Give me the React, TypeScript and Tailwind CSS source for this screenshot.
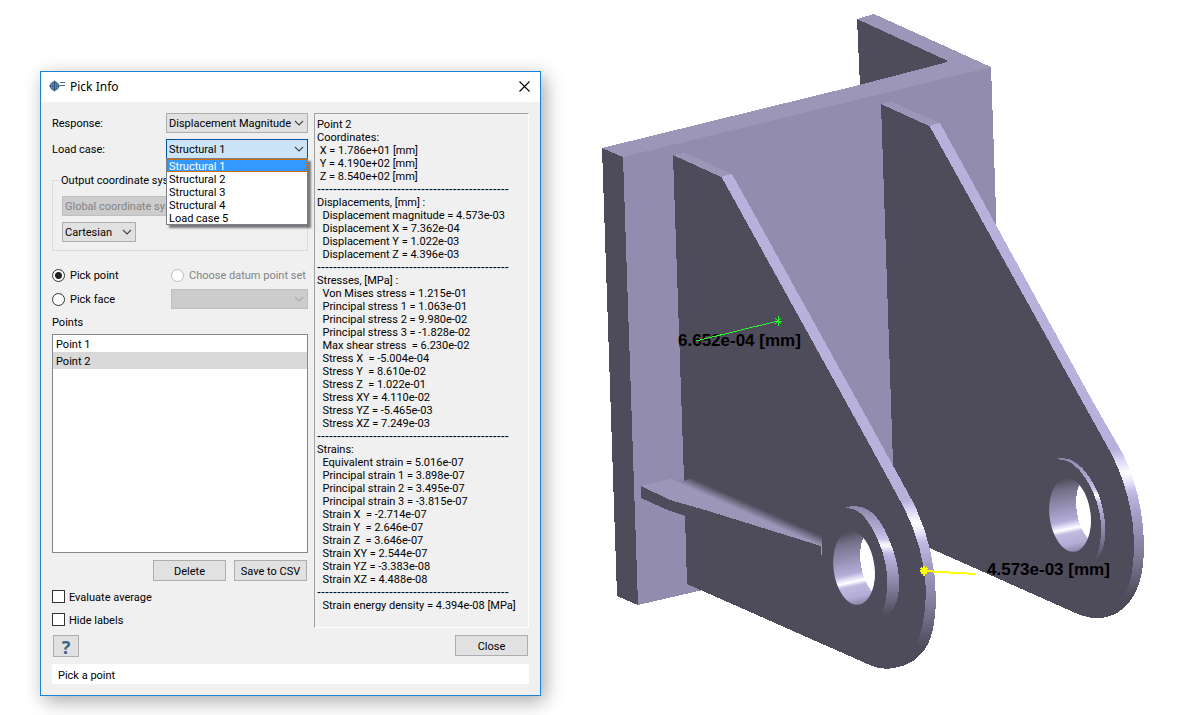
import { useState, type ReactNode, type SelectHTMLAttributes } from "react";

const RULE = "-".repeat(48);

const REPORT = `Point 2
Coordinates:
 X = 1.786e+01 [mm]
 Y = 4.190e+02 [mm]
 Z = 8.540e+02 [mm]
---
Displacements, [mm] :
  Displacement magnitude = 4.573e-03
  Displacement X = 7.362e-04
  Displacement Y = 1.022e-03
  Displacement Z = 4.396e-03
---
Stresses, [MPa] :
  Von Mises stress = 1.215e-01
  Principal stress 1 = 1.063e-01
  Principal stress 2 = 9.980e-02
  Principal stress 3 = -1.828e-02
  Max shear stress  = 6.230e-02
  Stress X  = -5.004e-04
  Stress Y  = 8.610e-02
  Stress Z  = 1.022e-01
  Stress XY = 4.110e-02
  Stress YZ = -5.465e-03
  Stress XZ = 7.249e-03
---
Strains:
  Equivalent strain = 5.016e-07
  Principal strain 1 = 3.898e-07
  Principal strain 2 = 3.495e-07
  Principal strain 3 = -3.815e-07
  Strain X  = -2.714e-07
  Strain Y  = 2.646e-07
  Strain Z  = 3.646e-07
  Strain XY = 2.544e-07
  Strain YZ = -3.383e-08
  Strain XZ = 4.488e-08
---
  Strain energy density = 4.394e-08 [MPa]`.split("\n");

const LOAD_CASES = ["Structural 1", "Structural 2", "Structural 3", "Structural 4", "Load case 5"];

function Select({ tone, className, children, ...rest }: SelectHTMLAttributes<HTMLSelectElement> & { tone: "normal" | "open" | "disabled"; className: string; children?: ReactNode }) {
  const tones = {
    normal: "border-[#adadad] bg-[#e1e1e1] text-black",
    open: "border-[#005499] bg-[#cce4f7] text-black",
    disabled: "border-[#bfbfbf] bg-[#cccccc] text-[#838383]",
  };
  return (
    <div className={`relative ${className}`}>
      <select {...rest} className={`block h-5 w-full appearance-none rounded-none border pt-0.5 pl-0.5 text-[11px] leading-4 opacity-100 outline-none ${tones[tone]}`}>
        {children}
      </select>
      <svg className="pointer-events-none absolute top-1.5 right-1 h-2 w-2.5" viewBox="0 0 10 8" fill="none" stroke={tone === "disabled" ? "#a8a8a8" : "#444"} strokeWidth="1.1">
        <path d="M1 2l4 4 4-4" />
      </svg>
    </div>
  );
}

function Radio({ label, ...rest }: { label: string; disabled?: boolean; defaultChecked?: boolean }) {
  return (
    <label className={`flex items-center gap-[5px] whitespace-nowrap ${rest.disabled ? "text-[#838383]" : ""}`}>
      <input
        type="radio"
        name="pick"
        {...rest}
        className="size-[13px] shrink-0 appearance-none rounded-full border border-[#333] bg-white checked:bg-[radial-gradient(circle,#222_3px,#fff_4px)] disabled:border-[#bcbcbc]"
      />
      <span className="pt-0.5">{label}</span>
    </label>
  );
}

function Check({ label }: { label: string }) {
  return (
    <label className="flex h-[13px] items-center gap-1">
      <input type="checkbox" className="size-[13px] appearance-none border border-[#333] bg-white checked:bg-[#333]" />
      <span className="pt-0.5">{label}</span>
    </label>
  );
}

function Button({ children, className }: { children: ReactNode; className: string }) {
  return <button className={`border border-[#adadad] bg-[#e1e1e1] pt-0.5 ${className}`}>{children}</button>;
}

function PickInfo() {
  const [loadCase, setLoadCase] = useState(LOAD_CASES[0]);
  return (
    <section className="mt-[71px] ml-10 w-[501px] shrink-0 self-start border border-[#1883d7] bg-[#f0f0f0] shadow-[4px_5px_18px_rgba(0,0,0,0.35)]">
      <header className="flex h-[30px] items-center justify-between bg-white pr-2.5 pl-2">
        <h1 className="flex items-center gap-1 font-['Noto_Sans'] text-[12px]">
          <svg className="mb-0.5 h-3 w-[17px]" viewBox="0 0 17 12" fill="none" stroke="#2c5580">
            <circle cx="5.500" cy="6" r="4.200" fill="#8fa9c4" />
            <ellipse cx="5.500" cy="6" rx="2" ry="4" strokeWidth=".6" />
            <path d="M0 6h11M5.500 .5v11" strokeWidth="1" />
            <path d="M2 4h7M2 8h7" strokeWidth=".6" />
            <path d="M11 2.500h5M11 5.500h5" strokeWidth="1.200" stroke="#46668a" />
          </svg>
          Pick Info
        </h1>
        <button aria-label="Close window" className="pb-0.5">
          <svg className="size-[11px]" viewBox="0 0 11 11" stroke="#000" strokeWidth="1.100">
            <path d="M.5.5l10 10M10.500.5l-10 10" />
          </svg>
        </button>
      </header>

      <div className="px-[11px] pt-[11px] pb-[11px]">
        <div className="flex gap-1.5">
          <div className="flex w-64 flex-col">
            <div className="flex items-center justify-between">
              <label htmlFor="response" className="pt-0.5">
                Response:
              </label>
              <Select id="response" tone="normal" className="w-[142px]">
                <option>Displacement Magnitude</option>
              </Select>
            </div>
            <div className="relative mt-1.5 flex items-center justify-between">
              <label htmlFor="case" className="pt-0.5">
                Load case:
              </label>
              <Select id="case" tone="open" className="w-[142px]" value={loadCase} onChange={(e) => setLoadCase(e.target.value)}>
                {LOAD_CASES.map((c) => (
                  <option key={c}>{c}</option>
                ))}
              </Select>
              <ul className="absolute top-[19px] right-0 z-10 w-[142px] border border-[#7a7f8c] bg-white leading-[15px] shadow-[3px_3px_2px_rgba(0,0,0,0.5)]">
                {LOAD_CASES.map((c) => (
                  <li key={c} onClick={() => setLoadCase(c)} className={`h-[13px] pl-0.5 ${c === loadCase ? "bg-[#3399ff] text-white outline-1 -outline-offset-1 outline-dotted outline-[#cc6600]" : ""}`}>
                    {c}
                  </li>
                ))}
              </ul>
            </div>

            <fieldset className="mt-3.5 border border-[#dcdcdc] px-[9px] pb-2">
              <legend className="-ml-px h-[14px] leading-4">Output coordinate system</legend>
              <Select aria-label="Coordinate system" tone="disabled" className="mt-[9px] w-full" disabled>
                <option>Global coordinate system</option>
              </Select>
              <Select aria-label="System type" tone="normal" className="mt-1.5 w-[74px]">
                <option>Cartesian</option>
              </Select>
            </fieldset>

            <div className="mt-[14px] flex h-5 items-center justify-between">
              <Radio label="Pick point" defaultChecked />
              <div className="w-[137px]">
                <Radio label="Choose datum point set" disabled />
              </div>
            </div>
            <div className="mt-1 flex items-center justify-between">
              <Radio label="Pick face" />
              <Select aria-label="Datum point set" tone="disabled" className="w-[137px]" disabled />
            </div>

            <h2 className="mt-1.5 leading-4">Points</h2>
            <ul className="mt-[3px] h-[219px] border border-[#828790] bg-white leading-[19px]">
              <li className="h-[17px] px-[3px]">Point 1</li>
              <li className="h-[17px] bg-[#d9d9d9] px-[3px]">Point 2</li>
            </ul>
            <div className="mt-[7px] flex justify-end gap-2 pr-px">
              <Button className="h-[21px] w-[73px]">Delete</Button>
              <Button className="h-[21px] w-[73px]">Save to CSV</Button>
            </div>
            <div className="mt-[9px] flex flex-col gap-2.5">
              <Check label="Evaluate average" />
              <Check label="Hide labels" />
            </div>
          </div>

          <div className="flex-1 self-start border border-t-[#a0a0a0] border-r-white border-b-white border-l-[#a0a0a0] pt-1 pb-[15px] pl-0.5 leading-[13px] whitespace-pre">
            {REPORT.map((line, i) =>
              line === "---" ? (
                <p key={i} className="font-['Liberation_Sans'] text-[12px] leading-[13px]">
                  {RULE}
                </p>
              ) : (
                <p key={i}>{line}</p>
              ),
            )}
          </div>
        </div>

        <div className="mt-[7px] flex items-start justify-between px-px">
          <Button className="h-[22px] w-[26px] font-['Noto_Sans'] text-[18px] leading-4 font-bold text-[#39648f]">?</Button>
          <Button className="h-[21px] w-[73px]">Close</Button>
        </div>
        <input aria-label="Status" readOnly value="Pick a point" className="mt-[7px] block h-5 w-full bg-white px-1.5 pt-0.5 outline-none" />
      </div>
    </section>
  );
}

function Hole({ cx, cy, id }: { cx: number; cy: number; id: string }) {
  return (
    <g>
      <clipPath id={id}>
        <ellipse cx={cx} cy={cy} rx="20.500" ry="37" transform={`rotate(-7 ${cx} ${cy})`} />
      </clipPath>
      <g clipPath={`url(#${id})`}>
        <rect x={cx - 24} y={cy - 42} width="48" height="84" fill="url(#bore)" transform={`rotate(-12 ${cx} ${cy})`} />
        <ellipse cx={cx + 27} cy={cy - 7} rx="20.500" ry="37" fill="#fff" transform={`rotate(-7 ${cx + 27} ${cy - 7})`} />
      </g>
    </g>
  );
}

function Star({ x, y, color, width }: { x: number; y: number; color: string; width: number }) {
  return <path d={`M${x - 4} ${y}h8M${x} ${y - 5}v10M${x - 3} ${y - 3}l6 6M${x + 3} ${y - 3}l-6 6`} stroke={color} strokeWidth={width} />;
}

function Bracket() {
  return (
    <svg className="block w-full" viewBox="560 0 625 715" role="img" aria-label="Bracket model" shapeRendering="crispEdges">
      <defs>
        <linearGradient id="bore" x1="0" y1="0" x2="0" y2="1">
          <stop offset=".06" stopColor="#4e4b5b" />
          <stop offset=".2" stopColor="#75718b" />
          <stop offset=".4" stopColor="#9792b5" />
          <stop offset=".56" stopColor="#b3add7" />
          <stop offset=".62" stopColor="#e2dff6" />
          <stop offset=".66" stopColor="#fff" />
          <stop offset=".71" stopColor="#c0badf" />
          <stop offset=".84" stopColor="#b3add7" />
          <stop offset=".94" stopColor="#8a85a5" />
        </linearGradient>
        <linearGradient id="rearRim" gradientUnits="userSpaceOnUse" x1="1110" y1="450" x2="1125" y2="610">
          <stop offset="0" stopColor="#b7b1db" />
          <stop offset=".04" stopColor="#cbc6ee" />
          <stop offset=".15" stopColor="#fff" />
          <stop offset=".22" stopColor="#e0dcf8" />
          <stop offset=".27" stopColor="#c0bae4" />
          <stop offset=".42" stopColor="#a39ec5" />
          <stop offset=".66" stopColor="#817d9a" />
          <stop offset=".92" stopColor="#4e4b5b" />
        </linearGradient>
        <linearGradient id="frontRim" gradientUnits="userSpaceOnUse" x1="905" y1="500" x2="920" y2="660">
          <stop offset="0" stopColor="#b7b1db" />
          <stop offset=".04" stopColor="#cbc6ee" />
          <stop offset=".15" stopColor="#fff" />
          <stop offset=".22" stopColor="#e0dcf8" />
          <stop offset=".27" stopColor="#c0bae4" />
          <stop offset=".42" stopColor="#a39ec5" />
          <stop offset=".66" stopColor="#817d9a" />
          <stop offset=".92" stopColor="#4e4b5b" />
        </linearGradient>
        <linearGradient id="boss" x1="0" y1="0" x2="0" y2="1">
          <stop offset="0" stopColor="#8c87a8" />
          <stop offset=".22" stopColor="#b3add7" />
          <stop offset=".3" stopColor="#c8c3ea" />
          <stop offset=".36" stopColor="#fff" />
          <stop offset=".44" stopColor="#bcb6e2" />
          <stop offset=".7" stopColor="#8c87a8" />
          <stop offset="1" stopColor="#4e4b5b" />
        </linearGradient>
        <linearGradient id="rib" gradientUnits="userSpaceOnUse" x1="757" y1="507" x2="753" y2="516">
          <stop offset="0" stopColor="#4e4b5b" />
          <stop offset="1" stopColor="#9c97b9" />
        </linearGradient>
      </defs>

      {/* Mounting angle */}
      <path d="M857 19L949 60V63L860 86Z" fill="#4e4b5b" />
      <path d="M623 157L991 67L997 240L893 480L820 550L703 590L638 605Z" fill="#928daf" />
      <path d="M602 148L623 157L638 605L617 596Z" fill="#4e4b5b" />
      <path d="M857 19L874 14L991 67L623 157L602 148L859 85L944 63L948 61Z" fill="#9c97b9" />

      {/* Rear plate */}
      <path d="M929 125L940 123L1092 400L1123 454C1136 480 1144 515 1144 545C1144 578 1137 595 1124 608C1112 618 1098 621 1080 615Z" fill="url(#rearRim)" />
      <path d="M881 104L929 125L1112 455C1126 483 1134 515 1134 543C1134 575 1128 594 1118 606L1115 614C1105 619 1095 620 1080 615L925 546L895 530L893 464Z" fill="#4e4b5b" />
      <path d="M881 104L892 102L940 123L929 126Z" fill="#9c97b9" />
      <path d="M1056 459C1074 454 1088 471 1098 493C1104 508 1106 525 1105 538C1104 548 1100 556 1095 561C1100 548 1102 535 1101 523C1099 505 1094 492 1086 479C1076 464 1068 459 1056 459Z" fill="url(#boss)" />
      <Hole cx={1070} cy={515} id="rearHole" />

      {/* Front plate */}
      <path d="M721 176L732 174L879 440L914 504C928 532 936 567 936 600C935 635 928 648 918 657C908 667 890 671 872 666Z" fill="url(#frontRim)" />
      <path d="M673 155L721 176L867 440L903 506C917 532 925 563 926 590C925 622 920 643 910 656V662C898 669 885 671 872 666L687 584L684 480Z" fill="#4e4b5b" />
      <path d="M673 155L685 153L732 174L721 177Z" fill="#9c97b9" />
      <path d="M844 508C870 499 882 523 888 537C896 555 899 570 899 582C899 599 896 607 890 613L881 615C886 604 888 590 887 575C886 559 880 543 873 530C864 514 857 508 844 508Z" fill="url(#boss)" />
      <Hole cx={854} cy={568} id="frontHole" />

      {/* Rib */}
      <path d="M641 486L670 500L705 510L705 524L685 516L670 511L641 498Z" fill="#4e4b5b" />
      <path d="M641 486L670 479L684 481L692 477L822 536V555H821V546L705 510L670 500Z" fill="url(#rib)" />

      {/* Probe labels */}
      <g className="font-['Liberation_Sans'] text-[17px] font-bold">
        <text x="678" y="346">6.652e-04 [mm]</text>
        <text x="987" y="575">4.573e-03 [mm]</text>
      </g>
      <path d="M696 341L778 321" stroke="#2df52d" />
      <Star x={778} y={321} color="#2df52d" width={1} />
      <path d="M924 571L976 574" stroke="#ff0" strokeWidth="2" />
      <Star x={924} y={571} color="#ff0" width={2} />
    </svg>
  );
}

export default function App() {
  return (
    <main className="flex min-h-screen overflow-hidden bg-white font-[Roboto,sans-serif] text-[11px] leading-4 text-black">
      <PickInfo />
      <div className="ml-[19px] min-w-0 flex-1">
        <Bracket />
      </div>
    </main>
  );
}
